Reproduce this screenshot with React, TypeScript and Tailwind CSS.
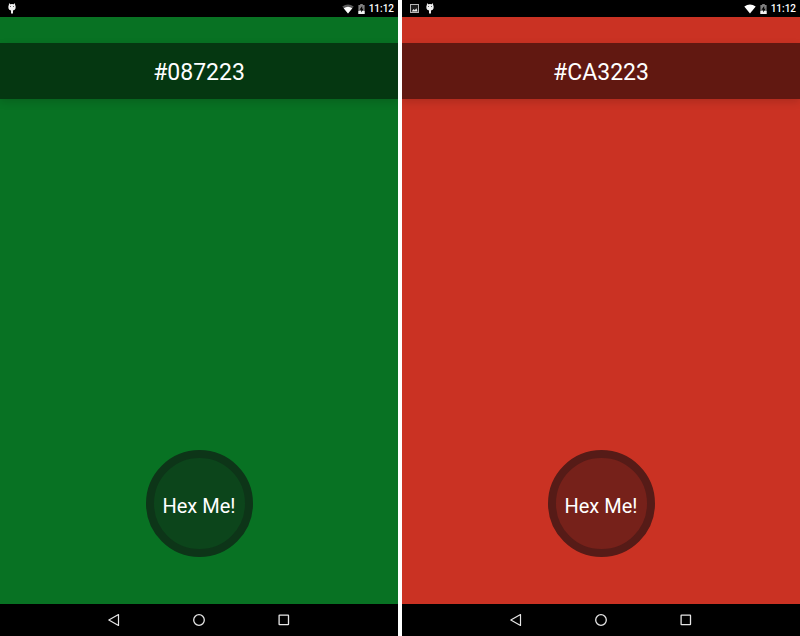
import React from "react";

type Theme = {
  hex: string;
  screen: string;
  header: string;
  button: string;
  screenshotTaken: boolean;
  fullSignal: boolean;
};

const themes: Theme[] = [
  {
    hex: "#087223",
    screen: "bg-[#087223]",
    header: "bg-[#053711]",
    button: "bg-[#0c451b] border-[#0d3518]",
    screenshotTaken: false,
    fullSignal: false,
  },
  {
    hex: "#CA3223",
    screen: "bg-[#ca3223]",
    header: "bg-[#611811]",
    button: "bg-[#76211a] border-[#561b17]",
    screenshotTaken: true,
    fullSignal: true,
  },
];

function PictureIcon() {
  return (
    <svg width="10" height="10" viewBox="0 0 10 10" aria-hidden="true">
      <rect x="0.5" y="0.5" width="8" height="8" fill="#1c1c1c" stroke="#b5b5b5" strokeWidth="1" />
      <path d="M1.6 7.4 3.6 5l1.2 1.3L6.4 4.2 7.6 7.4z" fill="#e8e8e8" />
    </svg>
  );
}

function DebugIcon() {
  return (
    <svg width="8" height="11" viewBox="0 0 8 11" aria-hidden="true">
      <path d="M1 0 2.2 1.2Q4 0.6 5.8 1.2L7 0 7.1 2 7.6 3v2.2Q7.2 7 5 7.4V10.4H3V7.4Q.8 7 .4 5.2V3l.5-1z" fill="#f0f0f0" />
      <circle cx="2.5" cy="3.4" r="0.5" fill="#333" />
      <circle cx="5.5" cy="3.4" r="0.5" fill="#333" />
    </svg>
  );
}

function WifiIcon({ full }: { full: boolean }) {
  return (
    <svg width="12" height="10" viewBox="0 0 12 10" aria-hidden="true">
      <path d="M6 9.6 0.3 2.6Q6-1.8 11.7 2.6z" fill={full ? "#fff" : "#5c5c5c"} />
      {!full && <path d="M6 9.6 1.7 4.3Q6 1.2 10.3 4.3z" fill="#fff" />}
    </svg>
  );
}

function BatteryIcon() {
  return (
    <svg width="7" height="10" viewBox="0 0 7 10" aria-hidden="true">
      <path d="M2.2 0h2.6v1H6.6v9H.4V1h1.8z" fill="#808080" />
      <path d="M.4 7h6.2V10H.4z" fill="#f2f2f2" />
      <path d="M4.2 2 1.5 5.8h1.7V8.4L5.6 4.8H4.2z" fill="#000" />
    </svg>
  );
}

function StatusBar({ theme }: { theme: Theme }) {
  return (
    <div className="flex h-[17px] shrink-0 items-center justify-between bg-black pr-1 pl-2">
      <div className="flex items-center gap-1.5">
        {theme.screenshotTaken && <PictureIcon />}
        <DebugIcon />
      </div>
      <div className="flex items-center">
        <WifiIcon full={theme.fullSignal} />
        <span className="ml-1 flex">
          <BatteryIcon />
        </span>
        <span className="ml-1 text-[10px] leading-4 font-medium">11:12</span>
      </div>
    </div>
  );
}

function NavigationBar() {
  return (
    <nav className="flex h-8 shrink-0 items-center justify-center gap-[71px] bg-black">
      <button type="button" aria-label="Back">
        <svg width="14" height="14" viewBox="0 0 14 14" fill="none" stroke="#e6e6e6" strokeWidth="1.2" strokeLinejoin="round">
          <path d="M11.5 1.6v10.8L1.8 7z" />
        </svg>
      </button>
      <button type="button" aria-label="Home">
        <svg width="14" height="14" viewBox="0 0 14 14" fill="none" stroke="#e6e6e6" strokeWidth="1.3">
          <circle cx="7" cy="7" r="5.3" />
        </svg>
      </button>
      <button type="button" aria-label="Recent apps">
        <svg width="14" height="14" viewBox="0 0 14 14" fill="none" stroke="#e6e6e6" strokeWidth="1.3">
          <rect x="2.1" y="2.2" width="9.4" height="9.4" rx="0.4" />
        </svg>
      </button>
    </nav>
  );
}

function Phone({ theme }: { theme: Theme }) {
  return (
    <section className={`flex min-w-0 flex-1 flex-col overflow-hidden ${theme.screen}`}>
      <StatusBar theme={theme} />
      <main className="flex flex-1 flex-col items-center justify-between pt-[26px] pb-[47px]">
        <h1 className={`w-full pt-3.5 pb-2.5 text-center text-[23px] leading-8 shadow-[0_3px_8px_rgba(0,0,0,0.14)] ${theme.header}`}>
          {theme.hex}
        </h1>
        <button
          type="button"
          className={`size-[107px] rounded-full border-8 pt-1 text-[20px] leading-6 whitespace-nowrap ${theme.button}`}
        >
          Hex Me!
        </button>
      </main>
      <NavigationBar />
    </section>
  );
}

export default function App() {
  return (
    <div className="flex min-h-screen gap-1 bg-white font-[Roboto,sans-serif] text-white">
      {themes.map((theme) => (
        <Phone key={theme.hex} theme={theme} />
      ))}
    </div>
  );
}
